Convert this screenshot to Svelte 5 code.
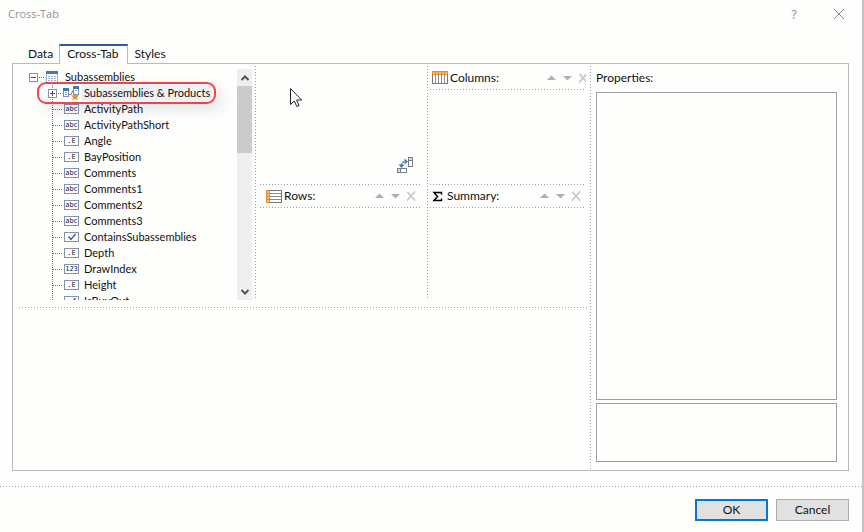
<script lang="ts">
	type Field = { name: string; kind: 'text' | 'decimal' | 'number' | 'bool' };

	const tabs = ['Data', 'Cross-Tab', 'Styles'];
	let activeTab = $state('Cross-Tab');

	const badges = { text: 'abc', decimal: '.E', number: '123' };

	const fields: Field[] = [
		{ name: 'ActivityPath', kind: 'text' },
		{ name: 'ActivityPathShort', kind: 'text' },
		{ name: 'Angle', kind: 'decimal' },
		{ name: 'BayPosition', kind: 'decimal' },
		{ name: 'Comments', kind: 'text' },
		{ name: 'Comments1', kind: 'text' },
		{ name: 'Comments2', kind: 'text' },
		{ name: 'Comments3', kind: 'text' },
		{ name: 'ContainsSubassemblies', kind: 'bool' },
		{ name: 'Depth', kind: 'decimal' },
		{ name: 'DrawIndex', kind: 'number' },
		{ name: 'Height', kind: 'decimal' },
		{ name: 'IsBuyOut', kind: 'bool' },
	];
</script>

{#snippet tools(label: string)}
	<div class="tools">
		<button class="tool" aria-label="Move {label} up">
			<svg width="16" height="16"><path d="M4 10h9L8.500 5.500z" fill="#b0b0b0" /></svg>
		</button>
		<button class="tool" aria-label="Move {label} down">
			<svg width="16" height="16"><path d="M4 6h9L8.500 10.500z" fill="#b0b0b0" /></svg>
		</button>
		<button class="tool" aria-label="Remove {label}">
			<svg width="16" height="16"><path d="M4.500 4l7.500 8.500M12 3.500L4 12.500" stroke="#c8c8c8" stroke-width="1.800" fill="none" /></svg>
		</button>
	</div>
{/snippet}

<div class="dialog" role="dialog" aria-labelledby="dialog-title">
	<header class="titlebar">
		<span id="dialog-title" class="title">Cross-Tab</span>
		<button class="caption" aria-label="Help">?</button>
		<button class="caption" aria-label="Close">
			<svg width="12" height="12"><path d="M1 1l10 10M11 1L1 11" stroke="#8c8c8c" fill="none" /></svg>
		</button>
	</header>

	<div class="tabs" role="tablist">
		{#each tabs as tab}
			<button
				class="tab"
				class:active={activeTab === tab}
				role="tab"
				aria-selected={activeTab === tab}
				onclick={() => (activeTab = tab)}
			>{tab}</button>
		{/each}
	</div>

	<main class="panel">
		<section class="designer">
			<div class="areas">
				<div class="source">
					<ul class="tree">
						<li>
							<div class="node root">
								<button class="expander" aria-label="Collapse Subassemblies">
									<svg width="9" height="9"><rect x=".5" y=".5" width="8" height="8" fill="#fff" stroke="#919191" /><path d="M2 4.500h5" stroke="#33527e" /></svg>
								</button>
								<span class="link"></span>
								<svg class="icon" width="12" height="12">
									<rect x=".5" y=".5" width="11" height="11" fill="#fff" stroke="#9db7d5" />
									<rect width="12" height="3" fill="#3f7ab5" />
									<path d="M2 5.500h8M2 7.500h8M2 9.500h8" stroke="#9db7d5" stroke-dasharray="2 1" />
								</svg>
								<span class="name">Subassemblies</span>
							</div>
							<ul class="children">
								<li class="node">
									<button class="expander" aria-label="Expand Subassemblies &amp; Products">
										<svg width="9" height="9"><rect x=".5" y=".5" width="8" height="8" fill="#fff" stroke="#919191" /><path d="M2 4.500h5M4.500 2v5" stroke="#33527e" /></svg>
									</button>
									<span class="link short"></span>
									<svg class="icon" width="17" height="15">
										<path d="M6 8.500h2l2.500-5H11" stroke="#777" fill="none" />
										<rect x=".5" y="3.500" width="5" height="7" fill="#fff" stroke="#7793ae" />
										<path d="M0 2h6v3H0z" fill="#3f7ab5" />
										<path d="M2 6.500h2M2 8.500h2" stroke="#9aa9b8" />
										<rect x="10.500" y="1.500" width="5" height="7" fill="#fff" stroke="#7793ae" />
										<path d="M10 0h6v3h-6z" fill="#3f7ab5" />
										<path d="M12 4.500h2" stroke="#9aa9b8" />
										<path d="M12 6.500l1.200 2.700h3l-2.300 2 .9 3.300-2.800-1.700-2.800 1.700.9-3.300-2.300-2h3z" fill="#ed9023" />
									</svg>
									<span class="name selected">Subassemblies &amp; Products</span>
									<span class="highlight" aria-hidden="true"></span>
								</li>
								{#each fields as field}
									<li class="node">
										<span class="link leaf"></span>
										<span class="badge">
											{#if field.kind === 'bool'}
												<svg width="12" height="8"><path d="M2.500 3.500l2.500 3 4.500-5.500" stroke="#3f51a5" stroke-width="1.300" fill="none" /></svg>
											{:else}
												{badges[field.kind]}
											{/if}
										</span>
										<span class="name">{field.name}</span>
									</li>
								{/each}
							</ul>
						</li>
					</ul>
					<div class="scrollbar">
						<button class="arrow" aria-label="Scroll up">
							<svg width="10" height="8"><path d="M1.500 6L5 2.500 8.500 6" stroke="#555" stroke-width="2" fill="none" /></svg>
						</button>
						<div class="thumb"></div>
						<button class="arrow" aria-label="Scroll down">
							<svg width="10" height="8"><path d="M1.500 2L5 5.500 8.500 2" stroke="#555" stroke-width="2" fill="none" /></svg>
						</button>
					</div>
				</div>

				<div class="dots-v"></div>

				<div class="column rows">
					<div class="corner">
						<button class="swap" aria-label="Swap rows and columns">
							<svg width="17" height="17">
								<rect x="11.500" y=".5" width="4" height="9" fill="#fff" stroke="#7d7d7d" />
								<path d="M12 1h3v3h-3z" fill="#d6dbe4" />
								<path d="M11 3.500h5" stroke="#7d7d7d" />
								<rect x=".5" y="11.500" width="9" height="4" fill="#fff" stroke="#7d7d7d" />
								<path d="M1 12h3v3H1z" fill="#d6dbe4" />
								<path d="M3.500 11v5" stroke="#7d7d7d" />
								<path d="M4.500 8.500c0-2.500 1.500-4 4-4" stroke="#3f7ab5" stroke-width="1.500" stroke-dasharray="2 1" fill="none" />
								<path d="M1.500 7.500h6l-3 3.500zM7.500 1.500v6l3.500-3z" fill="#3f7ab5" />
							</svg>
						</button>
					</div>
					<div class="dots-h"></div>
					<div class="head">
						<svg width="16" height="13">
							<rect x=".5" y=".5" width="15" height="12" fill="#fff" stroke="#777" />
							<path d="M4 3.500h12M4 6.500h12M4 9.500h12" stroke="#8b8b8b" />
							<path d="M0 0h4v13H0z" fill="#e08a36" />
							<path d="M1 1h2v2H1zM1 4h2v2H1zM1 7h2v2H1zM1 10h2v2H1z" fill="#f7bd78" />
						</svg>
						<span class="caption-text near">Rows:</span>
						{@render tools('row')}
					</div>
					<div class="dots-h"></div>
					<div class="drop"></div>
				</div>

				<div class="dots-v"></div>

				<div class="column">
					<div class="head tall">
						<svg width="16" height="13">
							<rect x=".5" y=".5" width="15" height="12" fill="#fff" stroke="#777" />
							<path d="M3.500 4v9M6.500 4v9M9.500 4v9M12.500 4v9" stroke="#8b8b8b" />
							<path d="M0 0h16v4H0z" fill="#e08a36" />
							<path d="M1 1h2v2H1zM4 1h2v2H4zM7 1h2v2H7zM10 1h2v2h-2zM13 1h2v2h-2z" fill="#f7bd78" />
						</svg>
						<span class="caption-text near">Columns:</span>
						{@render tools('column')}
					</div>
					<div class="dots-h"></div>
					<div class="drop first"></div>
					<div class="dots-h"></div>
					<div class="head">
						<svg width="11" height="11"><path d="M9.500 3.500v-2H2L5.500 5.500 2 9.500h7.500v-2" stroke="#000" stroke-width="1.500" fill="none" /></svg>
						<span class="caption-text">Summary:</span>
						{@render tools('summary')}
					</div>
					<div class="dots-h"></div>
					<div class="drop"></div>
				</div>
			</div>
			<div class="dots-h preview-line"></div>
			<div class="preview"></div>
		</section>

		<div class="dots-v"></div>

		<section class="properties" aria-labelledby="properties-label">
			<span id="properties-label">Properties:</span>
			<div class="box grid"></div>
			<div class="box hint"></div>
		</section>
	</main>

	<footer class="footer">
		<button class="push default">OK</button>
		<button class="push">Cancel</button>
	</footer>

	<svg class="pointer" width="12" height="20" aria-hidden="true">
		<path d="M.5 .5v16l3.700-3.500 2.600 5.500 2.300-1-2.500-5.500h5z" fill="#fff" stroke="#22222c" />
	</svg>
</div>

<style>
	:global(body) {
		background: #fefefd;
	}

	.dialog {
		position: relative;
		display: flex;
		flex-direction: column;
		min-height: 100vh;
		box-sizing: border-box;
		border-right: 2px solid #c4c4c6;
		color: #111;
		font-family: Lato, sans-serif;
		font-size: 12px;
		line-height: 16px;
	}

	button {
		padding: 0;
		border: 0;
		background: none;
		color: inherit;
		font: inherit;
	}
	svg { display: block; flex-shrink: 0; }
	ul { list-style: none; margin: 0; padding: 0; }

	.dots-h {
		height: 1px;
		flex-shrink: 0;
		background: repeating-linear-gradient(90deg, #a2a2a2 0 1px, transparent 1px 3px);
	}
	.dots-v {
		width: 1px;
		flex-shrink: 0;
		background: repeating-linear-gradient(180deg, #a2a2a2 0 1px, transparent 1px 3px);
	}

	.titlebar {
		display: flex;
		align-items: center;
		height: 28px;
		margin-bottom: 16px;
		padding: 0 12px 0 8px;
		color: #949494;
		font-family: "Open Sans", sans-serif;
		font-size: 11px;
	}
	.title { flex: 1; }
	.caption {
		display: flex;
		justify-content: center;
		width: 22px;
	}
	.caption + .caption { margin-left: 23px; }
	.caption:not(:last-child) { font-size: 13px; }

	.tabs {
		display: flex;
		align-items: flex-end;
		height: 20px;
		padding-left: 20px;
		margin-bottom: -1px;
		z-index: 1;
	}
	.tab {
		height: 20px;
		padding: 0 6px 0 8px;
	}
	.tab.active {
		padding: 0 8px 2px 7px;
		border: 1px solid #b9b9be;
		border-top: 2px solid #2d5a9e;
		border-bottom: 0;
		background: #fefefd;
	}
	.tab:last-child { padding-left: 7px; }

	.panel {
		display: flex;
		flex: 1;
		margin: 0 13px 0 12px;
		padding: 2px 11px 0 6px;
		border: 1px solid #b9b9be;
	}
	.designer {
		display: flex;
		flex-direction: column;
		flex: 571;
		min-width: 0;
	}
	.areas { display: flex; height: 234px; }
	.preview-line { margin: 7px 3px 0 0; }
	.preview { flex: 1; }

	.source {
		display: flex;
		flex: 233;
		min-width: 0;
		padding: 3px 3px 0 0;
	}
	.tree {
		flex: 1;
		min-width: 0;
		overflow: hidden;
		font-size: 11px;
		white-space: nowrap;
	}
	.node {
		position: relative;
		display: flex;
		align-items: center;
		height: 16px;
	}
	.root { padding-left: 10px; }
	.children {
		margin-left: 33px;
		background: repeating-linear-gradient(180deg, #777 0 1px, transparent 1px 2px) 0 0 / 1px 100% no-repeat;
	}
	.children .expander { margin-left: -4px; }
	.expander { z-index: 1; }
	.link {
		width: 6px;
		height: 1px;
		margin: 0 1px;
		background: repeating-linear-gradient(90deg, #777 0 1px, transparent 1px 2px);
	}
	.link.short { width: 4px; }
	.link.leaf { width: 10px; }
	.name { margin-left: 6px; padding: 0 1px; }
	.selected {
		margin-left: 2px;
		padding: 0 2px;
		background: #f0f0f2;
	}
	.badge {
		display: flex;
		align-items: center;
		justify-content: center;
		box-sizing: border-box;
		width: 15px;
		height: 10px;
		margin-right: -2px;
		border: 1px solid #7f93b3;
		background: #fff;
		color: #0c1830;
		font-family: "DejaVu Sans Mono", monospace;
		font-size: 7px;
		line-height: 8px;
	}
	.highlight {
		position: absolute;
		top: -3px;
		left: -15px;
		box-sizing: border-box;
		width: 179px;
		height: 22px;
		border: 2px solid #f0434a;
		border-radius: 9px;
		box-shadow: 6px 6px 14px rgba(0, 0, 40, 0.1);
		z-index: 2;
	}

	.scrollbar {
		display: flex;
		flex-direction: column;
		width: 15px;
		background: #efeff0;
	}
	.arrow {
		display: flex;
		align-items: center;
		justify-content: center;
		height: 17px;
	}
	.arrow:last-child { margin-top: auto; }
	.thumb { height: 67px; background: #cbcbcb; }

	.column {
		display: flex;
		flex-direction: column;
		flex: 162;
		min-width: 0;
	}
	.column > .dots-h { margin: 0 6px 0 2px; }
	.column.rows { flex: 171; }
	.rows > .dots-h { margin: 0 6px 0 4px; }
	.corner {
		display: flex;
		align-items: flex-end;
		justify-content: flex-end;
		height: 108px;
		padding: 0 13px 10px 0;
	}
	.head {
		display: flex;
		align-items: center;
		height: 22px;
		margin-right: 4px;
		padding: 0 2px 0 4px;
		overflow: hidden;
	}
	.rows .head { padding: 0 4px 0 10px; }
	.tall { height: 23px; }
	.tall .tools { margin-right: -7px; }
	.caption-text { margin-left: 4px; }
	.near { margin-left: 2px; }
	.tools { display: flex; margin-left: auto; }
	.drop { flex: 1; }
	.drop.first { flex: 0 0 94px; }

	.properties {
		display: flex;
		flex-direction: column;
		flex: 241;
		padding: 4px 0 8px 5px;
	}
	.box { border: 1px solid #a0a0a4; }
	.grid { flex: 1; margin-top: 6px; }
	.hint { height: 57px; margin-top: 3px; }

	.footer {
		display: flex;
		justify-content: flex-end;
		gap: 8px;
		margin-top: 15px;
		padding: 13px 13px 11px;
		background: repeating-linear-gradient(90deg, #a2a2a2 0 1px, transparent 1px 3px) 0 0 / 100% 1px no-repeat;
	}
	.push {
		width: 73px;
		height: 22px;
		border: 1px solid #adadad;
		background: #e1e1e1;
	}
	.default { border: 2px solid #0078d7; }

	.pointer {
		position: absolute;
		top: 88px;
		left: 290px;
	}
</style>
